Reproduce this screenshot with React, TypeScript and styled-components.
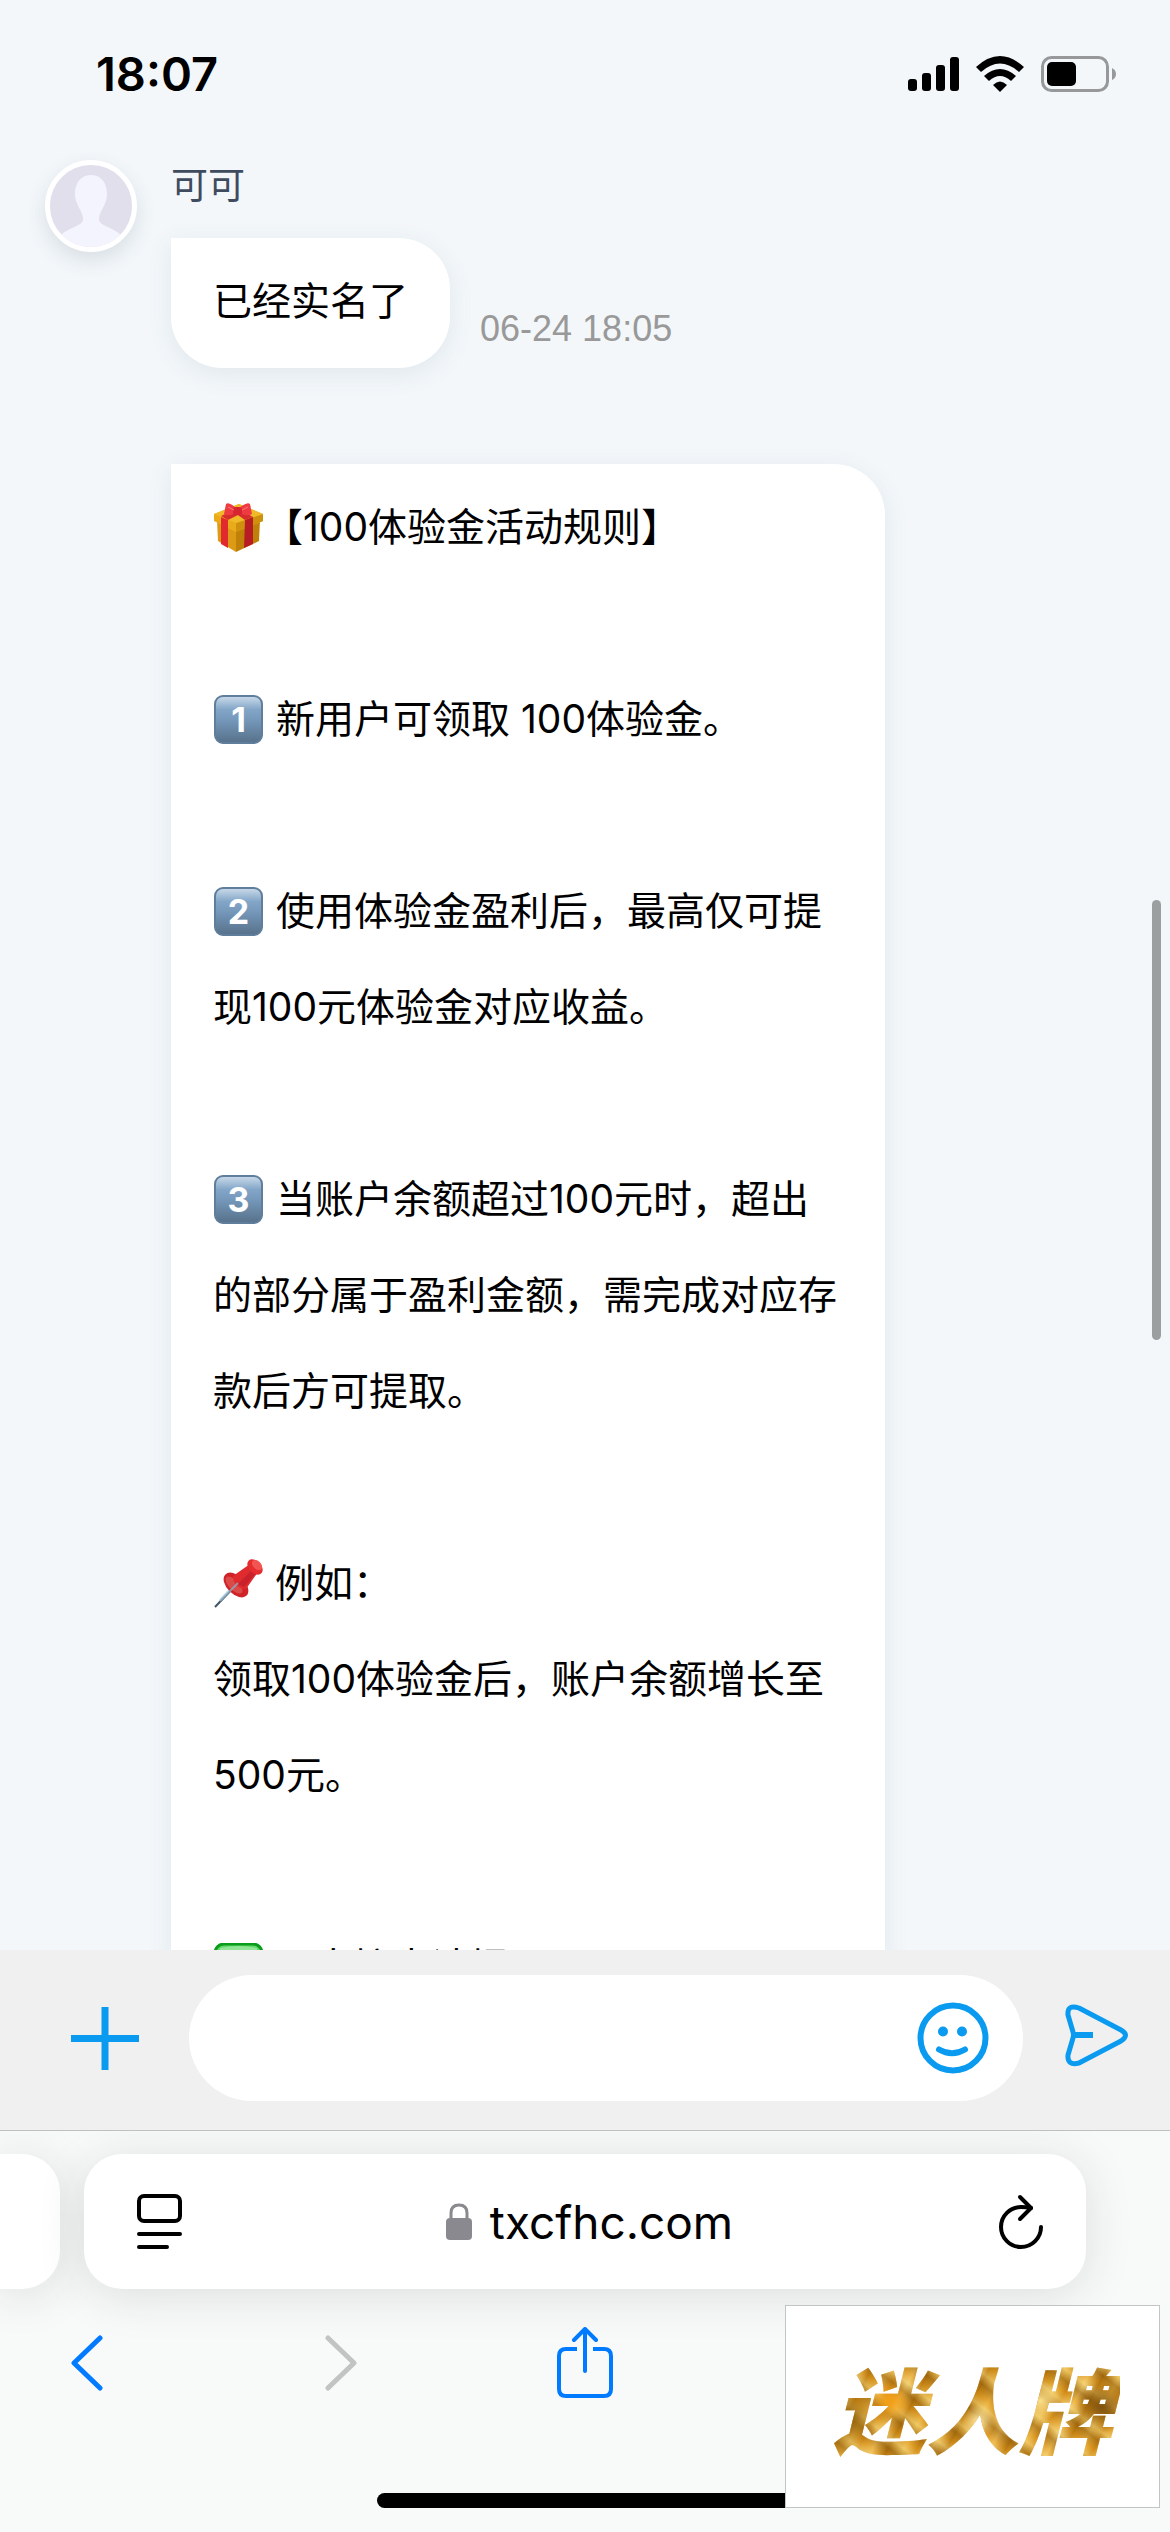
import React from 'react';
import styled, { createGlobalStyle } from 'styled-components';

const sans = `Inter, "Noto Sans CJK SC", "Liberation Sans", sans-serif`;
const accent = '#0a9bf1';
const iosBlue = '#007aff';

const GlobalStyle = createGlobalStyle`
  *, *::before, *::after { box-sizing: border-box; }
  body { margin: 0; background: #f3f7fa; font-family: ${sans}; color: #000; }
  button { border: 0; padding: 0; background: none; font: inherit; color: inherit; cursor: pointer; }
  svg { display: block; }
`;

const Screen = styled.div`
  position: relative;
  display: flex;
  flex-direction: column;
  height: 100vh;
  overflow: hidden;
  background: #f3f7fa;
`;

const StatusBar = styled.header`
  display: flex;
  flex: none;
  align-items: center;
  justify-content: space-between;
  height: 148px;
  padding: 0 54px 0 96px;
`;

const Clock = styled.time`
  font-size: 47px;
  font-weight: 600;
  line-height: 56px;
`;

const StatusIcons = styled.div`
  display: flex;
  align-items: center;
  gap: 17px;
`;

const Chat = styled.main`
  display: flex;
  flex: 1;
  gap: 34px;
  min-height: 0;
  overflow: hidden;
  padding: 12px 45px 0;
`;

const Avatar = styled.div`
  flex: none;
  width: 92px;
  height: 92px;
  border: 5px solid #fff;
  border-radius: 50%;
  background: #e0dfeb;
  overflow: hidden;
  box-shadow: 0 8px 20px rgba(60, 80, 100, 0.14);
`;

const Messages = styled.div`
  display: flex;
  flex: 1;
  flex-direction: column;
  align-items: flex-start;
  min-width: 0;
`;

const Sender = styled.div`
  margin-bottom: 26px;
  color: #3f4b5e;
  font-size: 37px;
  line-height: 52px;
`;

const MessageRow = styled.div`
  display: flex;
  align-items: flex-end;
  gap: 30px;
  margin-bottom: 96px;
`;

const Bubble = styled.div`
  max-width: 714px;
  padding: 15px 42px 19px;
  border-radius: 0 51px 51px 51px;
  background: #fff;
  box-shadow: 0 6px 24px rgba(70, 95, 120, 0.1);
  font-size: 39px;
  line-height: 96px;
`;

const Stamp = styled.time`
  padding-bottom: 18px;
  color: #999;
  font-family: "Liberation Sans", sans-serif;
  font-size: 36px;
  line-height: 42px;
`;

const Paragraph = styled.p<{ spaced?: boolean }>`
  margin: 0 0 ${p => (p.spaced ? '96px' : '0')};
`;

const Emoji = styled.svg`
  display: inline-block;
  width: 49px;
  height: 49px;
  margin: 0 1px;
  vertical-align: -11px;
`;

const Keycap = styled.span`
  display: inline-flex;
  align-items: center;
  justify-content: center;
  width: 49px;
  height: 49px;
  margin: 0 2px 0 1px;
  border: 2px solid #5f7e9b;
  border-radius: 9px;
  background: linear-gradient(#c7d8e7, #82a5c8 28%, #7598bb 50%, #58728b);
  color: #fff;
  font-size: 34px;
  font-weight: 700;
  line-height: 45px;
  vertical-align: 1px;
`;

const ScrollThumb = styled.div`
  position: absolute;
  top: 900px;
  right: 9px;
  width: 9px;
  height: 440px;
  border-radius: 5px;
  background: #9c9f9f;
`;

const Composer = styled.form`
  display: flex;
  flex: none;
  align-items: center;
  padding: 25px 42px 29px 71px;
  background: #f0f0f0;
`;

const InputShell = styled.div`
  display: flex;
  flex: 1;
  align-items: center;
  height: 126px;
  margin: 0 42px 0 50px;
  padding: 0 34px 0 50px;
  border-radius: 63px;
  background: #fff;
`;

const TextInput = styled.input`
  flex: 1;
  min-width: 0;
  height: 100%;
  border: 0;
  outline: 0;
  background: transparent;
  font: 39px ${sans};
`;

const BrowserChrome = styled.footer`
  display: flex;
  flex: none;
  flex-direction: column;
  height: 402px;
  border-top: 1px solid #bfc1c1;
  background: #f8faf9;
  overflow: hidden;
`;

const TabStrip = styled.div`
  display: grid;
  grid-template-columns: 60px 1fr;
  gap: 24px;
  height: 135px;
  margin-top: 23px;
  padding-right: 84px;
`;

const tabShadow = '0 6px 48px rgba(30, 40, 40, 0.13)';

const PreviousTab = styled.div`
  border-radius: 0 38px 38px 0;
  background: #fff;
  box-shadow: ${tabShadow};
`;

const AddressBar = styled.div`
  display: flex;
  align-items: center;
  justify-content: space-between;
  padding: 0 41px 0 53px;
  border-radius: 38px;
  background: #fff;
  box-shadow: ${tabShadow};
`;

const Address = styled.div`
  display: flex;
  align-items: center;
  gap: 18px;
  font-size: 46px;
  line-height: 60px;
`;

const NavBar = styled.nav`
  display: flex;
  gap: 188px;
  margin-top: 37px;
  padding-left: 64px;
`;

const NavButton = styled.button`
  display: flex;
  align-items: center;
  justify-content: center;
  width: 58px;
  height: 74px;
`;

const HomeIndicator = styled.div`
  width: 416px;
  height: 15px;
  margin: auto auto 24px;
  border-radius: 8px;
  background: #000;
`;

const BrandPlate = styled.div`
  position: absolute;
  right: 10px;
  bottom: 24px;
  display: flex;
  align-items: center;
  justify-content: center;
  width: 375px;
  height: 203px;
  border: 1px solid #c2c5c5;
  background: #fff;
`;

const BrandName = styled.span`
  padding: 0 8px;
  background:
    radial-gradient(circle at 22% 46%, #f29c12 0, rgba(226, 150, 26, 0) 9%),
    radial-gradient(circle at 52% 62%, #fbe6a2 0, rgba(240, 200, 100, 0) 10%),
    radial-gradient(circle at 73% 45%, #fbe08c 0, rgba(240, 200, 100, 0) 9%),
    radial-gradient(circle at 94% 50%, #80520c 0, rgba(128, 82, 12, 0) 9%),
    radial-gradient(circle at 8% 60%, #97650e 0, rgba(140, 90, 12, 0) 10%),
    repeating-linear-gradient(38deg, rgba(148, 92, 8, 0.55) 0, rgba(250, 215, 120, 0.5) 9px, rgba(232, 150, 20, 0.4) 17px, rgba(148, 92, 8, 0.55) 27px),
    repeating-linear-gradient(118deg, #b57a12 0, #e8bd55 14px, #c8881a 25px, #f0cf75 38px, #a76d0e 52px);
  background-clip: text;
  -webkit-background-clip: text;
  color: transparent;
  font-family: "Noto Sans CJK SC", sans-serif;
  font-size: 93px;
  font-style: italic;
  font-weight: 900;
  line-height: 120px;
`;

const GiftEmoji = () => (
  <Emoji viewBox="0 0 49 49" role="img" aria-label="礼物">
    <path d="M3 17 22 27V49L4 38Z" fill="#dd9a14" />
    <path d="M22 27 46 17 45 38 22 49Z" fill="#c08108" />
    <path d="M0 11 25 1 49 11V18L22 29 0 18Z" fill="#e9ab1a" />
    <path d="M22 20 49 11V18L22 29Z" fill="#cf900e" />
    <path d="M0 11 25 1 49 11 22 20Z" fill="#f0b92a" />
    <path d="M7 14 14 17V45L7 41Z" fill="#e02a2d" />
    <path d="M31 17 39 14V41L30 45Z" fill="#b71d22" />
    <path d="M7 13 22 6 30 9 14 17ZM18 8 23 5 39 14 31 17Z" fill="#d62c2c" />
    <path d="M23 6C18 1 14-1 12 1L10 11C13 14 20 11 23 9ZM24 6C30 1 34-1 36 1L38 11C33 14 28 11 24 9Z" fill="#ee3b42" />
    <rect x="19" y="4" width="9" height="8" rx="3" fill="#d62530" />
    <path d="M14 4 20 7M34 4 28 7" stroke="#ff7773" strokeWidth="1" />
  </Emoji>
);

const PinEmoji = () => (
  <Emoji viewBox="0 0 49 49" role="img" aria-label="图钉">
    <path d="M23 25 1 48" stroke="#3f5568" strokeWidth="2" />
    <path d="M22 24 6 41" stroke="#bfe0f2" strokeWidth="2" />
    <ellipse cx="22" cy="26" rx="15" ry="9" transform="rotate(45 22 26)" fill="#cf2229" />
    <ellipse cx="20" cy="26" rx="11" ry="5" transform="rotate(45 20 26)" fill="#dc4a48" />
    <path d="M19 17 36 5 44 13 32 30C25 30 19 25 19 17Z" fill="#df2a2e" />
    <path d="M30 28 44 12 40 9 24 25Z" fill="#b91c2b" opacity="0.6" />
    <path d="M24 24 6 42" stroke="#8fa9bc" strokeWidth="2" opacity="0.8" />
    <ellipse cx="41" cy="8" rx="9" ry="6" transform="rotate(45 41 8)" fill="#e52c2f" />
    <ellipse cx="43" cy="6" rx="6" ry="4" transform="rotate(45 43 6)" fill="#f25452" />
  </Emoji>
);

const CheckEmoji = () => (
  <Emoji viewBox="0 0 49 49" role="img" aria-label="完成">
    <rect x="1" y="1" width="47" height="47" rx="9" fill="#5fd867" stroke="#0c9c1c" strokeWidth="3" />
    <path d="M6 5Q24 1 43 5V10H6Z" fill="#92e596" />
    <path d="m12 25 9 10L37 13" fill="none" stroke="#fff" strokeWidth="6" />
  </Emoji>
);

const SignalIcon = () => (
  <svg width="51" height="35" viewBox="0 0 51 35" aria-label="信号">
    <rect y="22" width="9" height="12" rx="3" />
    <rect x="14" y="16" width="9" height="18" rx="3" />
    <rect x="28" y="8" width="9" height="26" rx="3" />
    <rect x="42" width="9" height="34" rx="3" />
  </svg>
);

const WifiIcon = () => (
  <svg width="48" height="36" viewBox="0 0 48 36" aria-label="无线网络">
    <path d="M0 11Q24-11 48 11L43 16Q24-1 5 16Z" />
    <path d="M8 20Q24 6 40 20L35 25Q24 15 13 25Z" />
    <path d="M17 29Q24 22 31 29L24 36Z" />
  </svg>
);

const BatteryIcon = () => (
  <svg width="75" height="36" viewBox="0 0 75 36" aria-label="电池">
    <rect x="1.5" y="1.5" width="65" height="33" rx="9" fill="none" stroke="#96989a" strokeWidth="3" />
    <rect x="6" y="6" width="29" height="24" rx="5" />
    <path d="M71 12Q75 14 75 18T71 24Z" fill="#96989a" />
  </svg>
);

const AvatarFigure = () => (
  <svg width="82" height="82" viewBox="0 0 82 82" aria-label="头像">
    <path
      d="M41 10C30 10 25 19 25 29C25 40 33 46 33 54C33 62 20 60 8 73V84H74V73C62 60 49 62 49 54C49 46 57 40 57 29C57 19 52 10 41 10Z"
      fill="#f4f4fe"
    />
  </svg>
);

const App = () => (
  <>
    <GlobalStyle />
    <Screen>
      <StatusBar>
        <Clock>18:07</Clock>
        <StatusIcons>
          <SignalIcon />
          <WifiIcon />
          <BatteryIcon />
        </StatusIcons>
      </StatusBar>

      <Chat>
        <Avatar>
          <AvatarFigure />
        </Avatar>
        <Messages>
          <Sender>可可</Sender>
          <MessageRow>
            <Bubble>已经实名了</Bubble>
            <Stamp>06-24 18:05</Stamp>
          </MessageRow>
          <Bubble>
            <Paragraph spaced><GiftEmoji />【100体验金活动规则】</Paragraph>
            <Paragraph spaced><Keycap>1</Keycap> 新用户可领取 100体验金。</Paragraph>
            <Paragraph spaced><Keycap>2</Keycap> 使用体验金盈利后，最高仅可提现100元体验金对应收益。</Paragraph>
            <Paragraph spaced><Keycap>3</Keycap> 当账户余额超过100元时，超出的部分属于盈利金额，需完成对应存款后方可提取。</Paragraph>
            <Paragraph><PinEmoji /> 例如：</Paragraph>
            <Paragraph spaced>领取100体验金后，账户余额增长至500元。</Paragraph>
            <Paragraph><CheckEmoji /> 可直接申请提</Paragraph>
          </Bubble>
        </Messages>
      </Chat>

      <Composer onSubmit={e => e.preventDefault()}>
        <button type="button" aria-label="添加">
          <svg width="68" height="63" viewBox="0 0 68 63" stroke={accent} strokeWidth="7">
            <path d="M34 0V63M0 31.5H68" />
          </svg>
        </button>
        <InputShell>
          <TextInput type="text" aria-label="消息" />
          <button type="button" aria-label="表情">
            <svg width="72" height="72" viewBox="0 0 72 72" fill="none" stroke={accent} strokeWidth="6">
              <circle cx="36" cy="36" r="32.5" />
              <circle cx="26" cy="29.5" r="5" fill={accent} stroke="none" />
              <circle cx="45" cy="29.5" r="5" fill={accent} stroke="none" />
              <path d="M22 47.5Q35 55 48 47.5" strokeLinecap="round" />
            </svg>
          </button>
        </InputShell>
        <button type="submit" aria-label="发送">
          <svg width="63" height="68" viewBox="0 0 63 68" fill="none" stroke={accent} strokeWidth="5" strokeLinejoin="round">
            <path d="M14 4 56 26Q65 31 56 37L14 59Q2 62 3 51L8 34Q9 31 8 28L3 11Q2 0 14 4Z" />
            <path d="M8 31H28" strokeWidth="6" />
          </svg>
        </button>
      </Composer>

      <BrowserChrome>
        <TabStrip>
          <PreviousTab />
          <AddressBar>
            <button type="button" aria-label="页面设置">
              <svg width="45" height="55" viewBox="0 0 45 55" fill="none" stroke="#000" strokeWidth="4" strokeLinecap="round">
                <rect x="2" y="2" width="41" height="25" rx="5" />
                <path d="M2 40H43M2 53H30" />
              </svg>
            </button>
            <Address>
              <svg width="26" height="37" viewBox="0 0 26 37" aria-label="安全">
                <path d="M5 17V10Q5 2 13 2T21 10V17" fill="none" stroke="#8a898f" strokeWidth="3" />
                <rect y="15" width="26" height="22" rx="4" fill="#8a898f" />
              </svg>
              <span>txcfhc.com</span>
            </Address>
            <button type="button" aria-label="重新加载">
              <svg width="48" height="58" viewBox="0 0 48 58" fill="none" stroke="#000" strokeWidth="4" strokeLinecap="round" strokeLinejoin="round">
                <path d="M44 34A20 20 0 1 1 24 14Q29 14 34 15" />
                <path d="M23 4 34 15 23 26" />
              </svg>
            </button>
          </AddressBar>
        </TabStrip>

        <NavBar>
          <NavButton type="button" aria-label="后退">
            <svg width="44" height="56" viewBox="0 0 44 56" fill="none" stroke={iosBlue} strokeWidth="5" strokeLinecap="round" strokeLinejoin="round">
              <path d="M29 3 3 28 29 53" />
            </svg>
          </NavButton>
          <NavButton type="button" aria-label="前进" disabled>
            <svg width="44" height="56" viewBox="0 0 44 56" fill="none" stroke="#c2c4c4" strokeWidth="5" strokeLinecap="round" strokeLinejoin="round">
              <path d="M11 3 37 28 11 53" />
            </svg>
          </NavButton>
          <NavButton type="button" aria-label="分享">
            <svg width="58" height="72" viewBox="0 0 58 72" fill="none" stroke={iosBlue} strokeWidth="4" strokeLinecap="round" strokeLinejoin="round">
              <path d="M21 22H10Q3 22 3 29V62Q3 69 10 69H48Q55 69 55 62V29Q55 22 48 22H37" strokeLinecap="butt" />
              <path d="M29 44V3M18 13 29 2 40 13" />
            </svg>
          </NavButton>
        </NavBar>
        <HomeIndicator />
      </BrowserChrome>

      <ScrollThumb />
      <BrandPlate>
        <BrandName>迷人牌</BrandName>
      </BrandPlate>
    </Screen>
  </>
);

export default App;
